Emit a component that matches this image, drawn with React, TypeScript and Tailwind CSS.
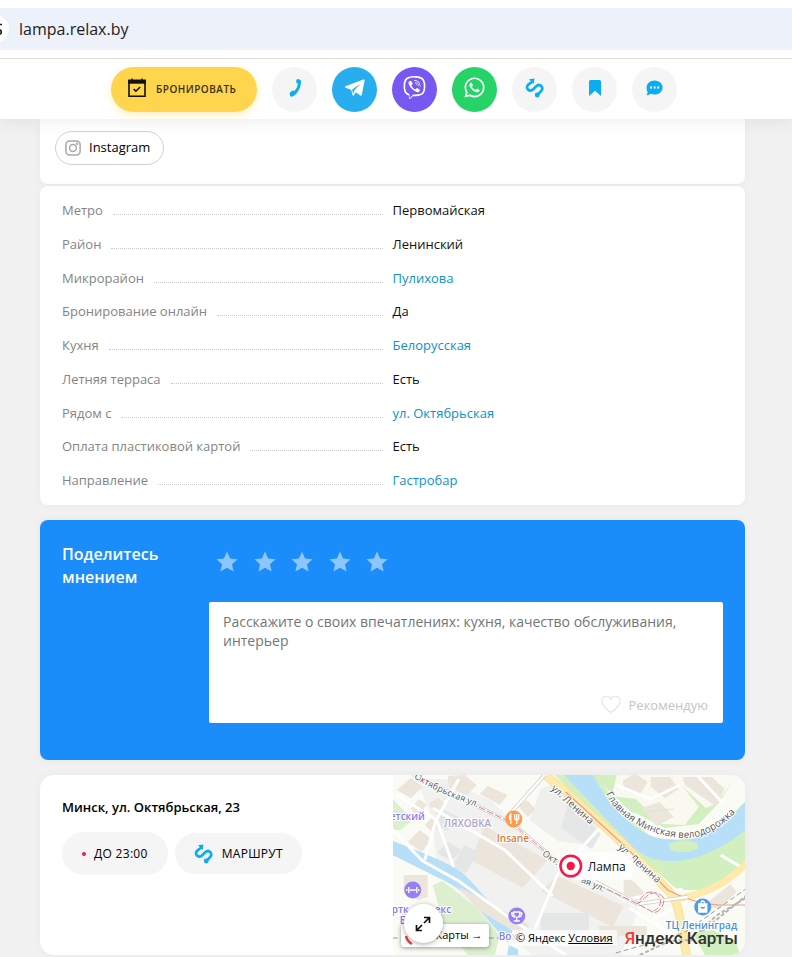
import React from "react";
import { FaWhatsapp, FaViber } from "react-icons/fa";

const details = [
  { label: "Метро", value: "Первомайская" },
  { label: "Район", value: "Ленинский" },
  { label: "Микрорайон", value: "Пулихова", link: true },
  { label: "Бронирование онлайн", value: "Да" },
  { label: "Кухня", value: "Белорусская", link: true },
  { label: "Летняя терраса", value: "Есть" },
  { label: "Рядом с", value: "ул. Октябрьская", link: true },
  { label: "Оплата пластиковой картой", value: "Есть" },
  { label: "Направление", value: "Гастробар", link: true },
];

function RouteIcon({ className }: { className: string }) {
  return (
    <svg viewBox="0 0 20 20" className={className} fill="none" aria-hidden="true">
      <path
        d="M7.5 3.5 3.6 6.3C1.6 7.8 1.5 10 3 11.4c1.6 1.5 3.700 1.300 5.200-.1l2.900-2.900c1.600-1.500 3.700-1.700 5.200-.3 1.500 1.500 1.300 3.500-.2 5L12.300 17"
        stroke="currentColor"
        strokeWidth="2.700"
      />
      <path d="M4 1.300 9.400.5l-.6 5.600z" fill="currentColor" />
      <circle cx="12.200" cy="17" r="2.400" fill="currentColor" />
    </svg>
  );
}

function CalendarIcon() {
  return (
    <svg viewBox="0 0 18 20" className="h-5 w-[18px]" fill="none" aria-hidden="true">
      <path d="M1 2.500h16v15.800H1z" stroke="#111" strokeWidth="1.600" />
      <path d="M.2 1.700h17.600v4H.2z" fill="#111" />
      <path d="M4 .6v2M14 .6v2" stroke="#111" strokeWidth="1.400" />
      <path d="m5.600 11 2.300 2.200 4.200-4.200" stroke="#111" strokeWidth="1.600" />
    </svg>
  );
}

function PhoneIcon() {
  return (
    <svg viewBox="0 0 16 20" className="h-5 w-4" aria-hidden="true">
      <path
        d="M10.300.8c-.5.1-1 .6-1.200 1.100L8.800 3.800c-.1.6.3 1 .9 1.200l.9.3c.4 1.900-1.300 6.200-3.300 7.800l-.9-.2c-.5-.2-1-.1-1.400.3l-1.700 1.600c-.4.4-.5 1-.3 1.500l.6 1.700c.2.600.8.900 1.400.8C10.200 17.600 14.200 8.800 13.600 2.700c-.1-.5-.4-.9-.9-1.100z"
        fill="#0aaef0"
        transform="rotate(3 8 10)"
      />
    </svg>
  );
}

function TelegramIcon() {
  return (
    <svg viewBox="0 0 20 18" className="h-[18px] w-5" fill="#fff" aria-hidden="true">
      <path d="M.4 7.300 18.400.6c.8-.3 1.400.2 1.200 1L16.800 15.800c-.2.9-.8 1.100-1.500.7l-4.400-3.200-2.200 3.100c-.3.4-.9.3-1-.2L6.200 10.800.5 8.700c-.8-.3-.8-1.100-.1-1.400z" />
      <path d="m7 10.700 8.600-6.200-6.500 7.200-.8 3.600z" fill="#28aeee" />
    </svg>
  );
}

function BookmarkIcon() {
  return (
    <svg viewBox="0 0 12 16" className="h-4 w-3" aria-hidden="true">
      <path d="M1.500 0h9A1.500 1.500 0 0 1 12 1.500V16l-6-5.200L0 16V1.500A1.500 1.500 0 0 1 1.500 0z" fill="#0aaef0" />
    </svg>
  );
}

function ChatIcon() {
  return (
    <svg viewBox="0 0 17 16" className="h-4 w-[17px]" aria-hidden="true">
      <path d="M8.600.4c4.500 0 8 3 8 7s-3.500 7.100-8 7.100c-1.400 0-2.700-.2-3.800-.8-1.200.9-2.700 1.500-4.500 1.500.9-1 1.300-2 1.300-3.200A7 7 0 0 1 .6 7.400c0-4 3.500-7 8-7z" fill="#0aaef0" />
      <path d="M4 6.500h2v2H4zM7.600 6.500h2v2h-2zM11.200 6.500h2v2h-2z" fill="#fff" />
    </svg>
  );
}

function InstagramIcon() {
  return (
    <svg viewBox="0 0 16 16" className="h-4 w-4" fill="none" stroke="#a9a9a9" strokeWidth="1.500" aria-hidden="true">
      <rect x=".9" y=".9" width="14.200" height="14.200" rx="3.500" />
      <circle cx="8" cy="8" r="3.400" />
      <circle cx="12.200" cy="3.800" r=".5" />
    </svg>
  );
}

const circle = "flex h-[45px] w-[45px] shrink-0 items-center justify-center rounded-full pb-1";

function ActionBar() {
  return (
    <div className="flex items-center justify-center gap-[15px] pt-2 pr-1 pb-[7px]">
      <button
        type="button"
        className="flex h-[45px] w-[146px] items-center gap-[10px] rounded-full bg-[#ffd54e] pl-[17px] shadow-[0_3px_8px_rgba(255,213,78,0.350)]"
      >
        <span className="pb-[3px]"><CalendarIcon /></span>
        <span className="text-[10px] font-semibold tracking-wider text-[#3a3012]">БРОНИРОВАТЬ</span>
      </button>
      <a href="#phone" aria-label="Позвонить" className={`${circle} bg-[#f5f5f5]`}><PhoneIcon /></a>
      <a href="#telegram" aria-label="Telegram" className={`${circle} bg-[#28aeee]`}><TelegramIcon /></a>
      <a href="#viber" aria-label="Viber" className={`${circle} bg-[#7858f2] text-white`}><FaViber size={23} /></a>
      <a href="#whatsapp" aria-label="WhatsApp" className={`${circle} bg-[#26d366] text-white`}><FaWhatsapp size={23} /></a>
      <a href="#route" aria-label="Маршрут" className={`${circle} bg-[#f5f5f5] text-[#0aaef0]`}><RouteIcon className="h-5 w-5" /></a>
      <button type="button" aria-label="В закладки" className={`${circle} bg-[#f5f5f5]`}><BookmarkIcon /></button>
      <button type="button" aria-label="Отзывы" className={`${circle} bg-[#f5f5f5]`}><ChatIcon /></button>
    </div>
  );
}

function Details() {
  return (
    <dl className="grid min-h-[319px] content-between rounded-lg bg-white px-[22px] pt-3.5 pb-[15px] text-[13px] leading-5 shadow-[0_0_10px_rgba(0,0,0,0.040)]">
      {details.map((d) => (
        <div key={d.label} className="grid grid-cols-2">
          <dt className="flex text-[#858585]">
            <span>{d.label}</span>
            <span className="mr-[10px] mb-[5px] ml-[10px] flex-1 border-b border-dotted border-[#c8c8c8]" />
          </dt>
          <dd className="text-[#111]">
            {d.link ? <a href="#catalog" className="text-[#0b93cc]">{d.value}</a> : d.value}
          </dd>
        </div>
      ))}
    </dl>
  );
}

function ReviewForm() {
  return (
    <form className="mt-[15px] flex min-h-[240px] rounded-lg bg-[#1b8dfb] px-[22px] pt-[23px] pb-[37px] shadow-[0_0_10px_rgba(0,0,0,0.040)]">
      <h2 className="w-[147px] shrink-0 text-[16px] leading-[23px] font-semibold text-white">
        Поделитесь
        <br />
        мнением
      </h2>
      <div className="min-w-0 flex-1">
        <fieldset aria-label="Оценка" className="mt-2 ml-[7px] flex w-[172px] justify-between">
          {[1, 2, 3, 4, 5].map((n) => (
            <label key={n} className="relative cursor-pointer">
              <input type="radio" name="rating" value={n} aria-label={`${n}`} className="absolute inset-0 h-full w-full cursor-pointer opacity-0" />
              <svg viewBox="0 0 22 22" className="h-[22px] w-[22px]" aria-hidden="true">
                <path d="m11 .5 3.100 6.900 7.400.8-5.500 5 1.600 7.400L11 16.800l-6.600 3.800L6 13.200.5 8.200l7.400-.8z" fill="#8dc6fd" />
              </svg>
            </label>
          ))}
        </fieldset>
        <div className="relative mt-[29px]">
          <textarea
            aria-label="Отзыв"
            placeholder="Расскажите о своих впечатлениях: кухня, качество обслуживания, интерьер"
            className="block h-[121px] w-full resize-none overflow-hidden rounded-[2px] bg-white px-[14px] py-[10px] text-[14px] leading-[19px] placeholder:text-[#757575]"
          />
          <label className="absolute right-[15px] bottom-2 flex cursor-pointer items-center gap-2 text-[13px] leading-5 text-[#c4c4c4]">
            <input type="checkbox" className="absolute inset-0 h-full w-full cursor-pointer opacity-0" />
            <svg viewBox="0 0 20 18" className="h-[18px] w-5" fill="none" aria-hidden="true">
              <path d="M10 16.500C4.600 12.900 1.100 9.200 1.100 5.500a4.400 4.400 0 0 1 8.900-1.700 4.400 4.400 0 0 1 8.900 1.700c0 3.700-3.500 7.400-8.900 11z" stroke="#e5e5e5" strokeWidth="1.300" />
            </svg>
            Рекомендую
          </label>
        </div>
      </div>
    </form>
  );
}

function MapDrawing() {
  return (
    <svg viewBox="0 0 353 180" preserveAspectRatio="xMidYMid slice" className="absolute inset-0 h-full w-full font-['Open_Sans','Noto_Sans',sans-serif]" role="img" aria-label="Карта">
      <defs>
        <path id="street-oktyabrskaya" d="M21 3Q50 21 94 35" />
        <path id="street-lenina-top" d="M158 14Q178 33 208 59" />
        <path id="street-lenina-low" d="M225 73Q244 91 277 119" />
        <path id="bike-road" d="M213 19C226 45 262 64 297 63Q328 59 353 25" />
      </defs>
      <rect width="353" height="180" fill="#fbfbf5" />
      <path d="M24 4 54 4 98 26 165 87 206 112 246 134 228 180H140L60 112 44 90 40 45z" fill="#f1f2f0" />
      <path d="M148 14 165 7 207 50 201 71 165 66 137 45z" fill="#eff0ee" />
      <path d="M0 24 20 45 8 55H0zM40 110l10-4 32 25 25 29-5 20H75L50 148z" fill="#dcf0cf" />
      <path d="M162 0h41l30 40 28 24 40 1 34-21 18-18v62l-23 19-22 8h-23L231 68z" fill="#d2f0bf" />
      <path d="M200 0h144l-18 28-20 21-34 4-37-19z" fill="#d2f0bf" />
      <path d="M224 0h57l25 32-14 18-23-1-26-25-24-3z" fill="#faf9f0" />
      <path d="M278 0h67l-22 29-10 4z" fill="#fafaf2" />
      <path d="M0 66Q35 79 61 92 72 98 87 116L121 154 115 168 104 155 80 128Q72 116 54 107L0 80zM116 170l9 4 1 8h-12z" fill="#b7dff7" />
      <path d="M171 0h29l15 25Q240 55 261 62q32 8 57-6 20-12 35-30v29q-27 22-55 29-28 6-47-4-12-7-20-17l-26-28z" fill="#b7dff7" />
      <path d="M276 69q15-7 28-1 6 7-11 9-18 1-17-8z" fill="#d2f0bf" />
      <g fill="#ebe5db">
        <path d="m92 51 63 34-25 28-52-28zM65 111l72 39-10 10-43-26zM165 101l66 30-11 21-72-36zM4 15l14-12 12 9-12 11zM55 1l17-1 12 10-10 10-18-8zM87 19l8-8 20 9-8 10zM18 34l8-10 8 6-9 11zM36 29l9-6 9 7-10 10zM11 100h24v22l-10 3-14-10zM15 67l12-12 12 9-10 13zM32 50l9-9 8 7-9 10zM125 31l9-6 9 9-8 8zM230 6l12-8 13 9-8 13-15-4zM249 33l18-6 14 15-17 9zM258 2h19l9 12-14 9-14-11zM290 2h29l13 12-9 17-31-21zM231 102l11 5 9 10-6 9-14-7zM310 131l28-22 6 8-18 17zM206 151h48v10h-48z" />
      </g>
      <g fill="#e5e6e6">
        <path d="m72 70 13 7-12 22-14-8zM48 33l18 9-12 14-15-8zM148 138h48v20h-48zM176 25l32 34-9 15-31-21zM55 67l14 8-10 11-15-8zM187 160h40l-5 12-35-2z" />
      </g>
      <g fill="none" stroke="#fff" strokeWidth="3">
        <path d="M4 20 44 45 61 92M40 33l72 42 48 46M0 55l30 31 36 20 58 42 49 32M66 4 43 46 32 85M206 54l-41 45-27 65M230 125l60-11M260 145l93-52M237 133l59 37M223 10l35 14 29-14M304 0l26 28M328 80l25 15" />
      </g>
      <g fill="none" stroke="#d4eccb" strokeWidth="1">
        <path d="M210 5q16 23 32 34M235 26l16 11 30-3M184 25l46 50" />
      </g>
      <path d="M150-2 171 15 231 69 275 115Q283 123 286 137L294 181" fill="none" stroke="#f5e2a4" strokeWidth="9" />
      <path d="M150-2 171 15 231 69 275 115Q283 123 286 137L294 181M283 124Q326 118 354 88" fill="none" stroke="#feebab" strokeWidth="7" />
      <path d="M173 17 231 70 275 115Q302 129 325 130H353" fill="none" stroke="#ef9b83" strokeWidth="1.200" />
      <g fill="none" stroke="#d2cccc" strokeWidth="4">
        <path d="M20-1 78 28 119 48 165 87 245 129M118 38 152 0M245 129l50-7" />
      </g>
      <path d="M20-1 78 28 119 48 165 87 245 129M118 38 152 0M245 129l50-7" fill="none" stroke="#fff" strokeWidth="2.500" />
      <path d="M78 28 119 48 165 87M206 110l39 19 17 9q10-5 9-15-8-10-18-1l-8 7q8-17 19-10 9 10-3 17" fill="none" stroke="#d98386" strokeWidth="1" strokeDasharray="7 2" />
      <path d="M0 163h120M223 178q35-10 68-20l62-44" fill="none" stroke="#999" strokeWidth="1" strokeDasharray="5 3" />
      <path d="m247 180 30-14 22-1 24-24 30-18M305 160l48-39" fill="none" stroke="#b5b5b5" strokeWidth="2" strokeDasharray="4 2" />
      <path d="M300 158l20-3 23 11 4 14h-35z" fill="#d2f0bf" />
      <g fill="#53565b" stroke="#fff" strokeWidth="2" paintOrder="stroke" fontSize="10">
        <text fontSize="9"><textPath href="#street-oktyabrskaya">Октябрьская ул.</textPath></text>
        <text><textPath href="#street-lenina-top">ул. Ленина</textPath></text>
        <text><textPath href="#street-lenina-low">ул. Ленина</textPath></text>
        <text><textPath href="#bike-road">Главная Минская велодорожка</textPath></text>
        <text fontSize="9" transform="translate(149 80) rotate(34)">Окт.</text>
        <text fontSize="9" transform="translate(188 107) rotate(24)">ая ул.</text>
      </g>
      <g stroke="#fff" strokeWidth="2" paintOrder="stroke" fontSize="10" fontWeight="600">
        <text x="-3" y="45" fill="#8b7cea">етский</text>
        <text x="51" y="52" fill="#aaa6c8">ЛЯХОВКА</text>
        <text x="104" y="67" fill="#d97a2e">Insane</text>
        <text x="-1" y="138" fill="#8b7cea">ртк</text>
        <text x="42" y="138" fill="#8b7cea">екс</text>
        <text x="7" y="149" fill="#8b7cea">Б</text>
        <text x="106" y="165" fill="#8b7cea">Вох</text>
        <text x="273" y="154" fill="#4a91db">ТЦ Ленинград</text>
      </g>
      <g fill="none" stroke="#fff" strokeWidth="1.300">
        <circle cx="121" cy="44" r="8.500" fill="#ff9b4b" stroke="none" />
        <path d="M118 39q-2 2-1 5h1v5zM122 39v4q0 2 2 2t2-2v-4M124 39v10" />
        <circle cx="20" cy="115" r="8.500" fill="#9680f7" stroke="none" />
        <path d="M17 115h6M16 112v6M24 112v6M14 114v2M26 114v2" />
        <circle cx="124" cy="141" r="8.500" fill="#9680f7" stroke="none" />
        <path d="M121 137h6v3q-3 5-6 0zM121 138h-2q0 4 3 4M127 138h2q0 4-3 4M124 142v4M121 146h6" />
        <circle cx="310" cy="132" r="8.500" fill="#4b9cf0" stroke="none" />
        <path d="M306 129h8v8h-8z" fill="#fff" />
        <path d="M308 130q0-4 2-4t2 4" />
        <path d="M308 132q2 2 4 0" stroke="#4b9cf0" />
      </g>
      <rect x="179" y="77" width="61" height="28" rx="5" fill="#fff" fillOpacity=".8" />
      <circle cx="178" cy="91" r="13" fill="#fff" />
      <circle cx="178" cy="91" r="10.300" fill="#fff" stroke="#fa1747" strokeWidth="2.500" />
      <circle cx="178" cy="91" r="4.200" fill="#fa1747" />
      <text x="195" y="96" fontSize="12" fill="#111">Лампа</text>
    </svg>
  );
}

function MapPanel() {
  return (
    <div className="relative min-h-[180px] overflow-hidden rounded-l-[4px] rounded-r-[14px]">
      <MapDrawing />
      <a href="#maps" className="absolute bottom-2 left-2 flex h-[23px] w-[88px] items-center justify-end rounded-[3px] bg-white pr-1.5 text-[11px] text-black shadow-[0_1px_4px_rgba(0,0,0,0.400)]">
        <svg viewBox="0 0 12 12" className="absolute bottom-0 left-1 h-3 w-3" aria-hidden="true">
          <path d="M1 1q1 5 6 8" fill="none" stroke="#e8403a" strokeWidth="2.500" />
        </svg>
        Карты →
      </a>
      <button type="button" aria-label="Развернуть карту" className="absolute bottom-3 left-[11px] flex h-[39px] w-[39px] items-center justify-center rounded-full bg-white shadow-[0_1px_5px_rgba(0,0,0,0.350)]">
        <svg viewBox="0 0 16 16" className="h-4 w-4" fill="none" stroke="#111" strokeWidth="1.700" aria-hidden="true">
          <path d="M9 1.500h5.500V7M14.500 1.500 9 7M7 14.500H1.500V9M1.500 14.500 7 9" />
        </svg>
      </button>
      <div className="absolute right-[7px] bottom-[7px] flex items-center gap-2 text-black">
        <p className="bg-white/70 px-1 text-[11px] leading-4 whitespace-nowrap">
          © Яндекс <a href="#terms" className="underline">Условия</a>
        </p>
        <a href="#yandex" className="font-['Roboto',sans-serif] text-[17px] leading-5 font-medium whitespace-nowrap text-[#333]">
          <span className="text-[#f43b32]">Я</span>ндекс Карты
        </a>
      </div>
    </div>
  );
}

export default function App() {
  return (
    <div className="min-h-screen bg-[#f1f1f1] font-['Open_Sans','Noto_Sans',sans-serif] text-black">
      <header className="relative z-10 bg-white shadow-[0_2px_18px_rgba(0,0,0,0.070)]">
        <div className="border-b border-[#dedede] py-2">
          <div className="flex h-[42px] items-center bg-[#ecf1fa]">
            <svg viewBox="0 0 9 28" className="h-7 w-[9px] shrink-0" fill="none" aria-hidden="true">
              <circle cx="-5" cy="14" r="14" fill="#fff" />
              <path d="M0 9.500h2" stroke="#222" strokeWidth="1.700" />
              <circle cx="-1" cy="17" r="2.300" stroke="#222" strokeWidth="1.800" />
            </svg>
            <input aria-label="Адрес страницы" defaultValue="lampa.relax.by" className="ml-[10px] w-full bg-transparent text-[16px] leading-6 text-[#1f2023] outline-none" />
          </div>
        </div>
        <ActionBar />
      </header>
      <main className="mr-[47px] ml-10">
        <section className="mb-[2px] rounded-b-lg bg-white px-[15px] pt-3 pb-[19px] shadow-[0_0_10px_rgba(0,0,0,0.040)]">
          <a href="#instagram" className="inline-flex h-[34px] items-center gap-2 rounded-full border border-[#d2d2d2] pr-[13px] pl-[9px] align-top text-[13px]">
            <InstagramIcon />
            Instagram
          </a>
        </section>
        <Details />
        <ReviewForm />
        <section className="mt-[15px] grid grid-cols-2 rounded-[14px] bg-white shadow-[0_0_10px_rgba(0,0,0,0.040)]">
          <div className="pt-[22px] pl-[22px]">
            <h2 className="text-[13px] leading-5 font-semibold">Минск, ул. Октябрьская, 23</h2>
            <div className="mt-[15px] flex items-center gap-[7px] text-[12px]">
              <p className="flex h-[43px] items-center gap-2 rounded-full bg-[#f5f5f5] px-5 tracking-wide whitespace-nowrap">
                <span className="h-1 w-1 rounded-full bg-[#fa1747]" />
                ДО 23:00
              </p>
              <a href="#route" className="flex h-[41px] items-center gap-2 rounded-full bg-[#f5f5f5] px-[19px] tracking-wide whitespace-nowrap">
                <RouteIcon className="h-5 w-5 text-[#0aaef0]" />
                МАРШРУТ
              </a>
            </div>
          </div>
          <MapPanel />
        </section>
      </main>
    </div>
  );
}
